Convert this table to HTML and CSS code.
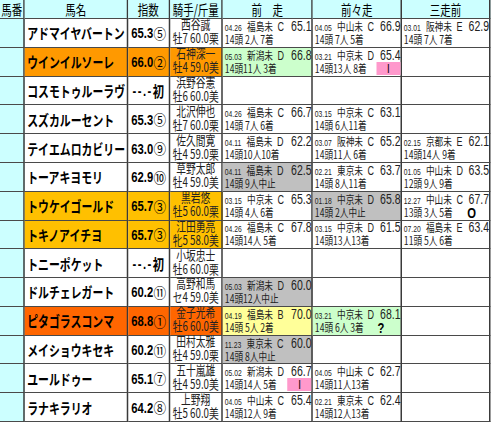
FILE: index.html
```html
<!DOCTYPE html>
<html lang="ja">
<head>
<meta charset="utf-8">
<title>出馬表</title>
<link rel="stylesheet" href="styles.css">
</head>
<body>
<div class="frame">
<div class="sheet">
  <div class="c hd">馬番</div>
  <div class="c hd">馬名</div>
  <div class="c hd">指数</div>
  <div class="c hd">騎手/斤量</div>
  <div class="c hd">前　走</div>
  <div class="c hd">前々走</div>
  <div class="c hd">三走前</div>

  <div class="c no"></div>
  <div class="c nm">アドマイヤバートン</div>
  <div class="c ix"><span class="v">65.3</span><span class="cn">⑤</span></div>
  <div class="c jk"><span>西谷誠</span><span>牡7 60.0栗</span></div>
  <div class="c rc"><div class="l1"><span class="dt">04.26</span><span class="vn">福島未</span><span class="cl">C</span><span class="sc">65.1</span></div><div class="l2"><span>14頭 2人 7着</span></div></div>
  <div class="c rc"><div class="l1"><span class="dt">04.05</span><span class="vn">中山未</span><span class="cl">C</span><span class="sc">66.9</span></div><div class="l2"><span>14頭 7人 5着</span></div></div>
  <div class="c rc"><div class="l1"><span class="dt">03.01</span><span class="vn">阪神未</span><span class="cl">E</span><span class="sc">62.9</span></div><div class="l2"><span>14頭 7人 7着</span></div></div>

  <div class="c no"></div>
  <div class="c nm or">ウインイルソーレ</div>
  <div class="c ix or"><span class="v">66.0</span><span class="cn">②</span></div>
  <div class="c jk or"><span>石神深一</span><span>牡4 59.0美</span></div>
  <div class="c rc gn"><div class="l1"><span class="dt">05.03</span><span class="vn">新潟未</span><span class="cl">D</span><span class="sc">66.8</span></div><div class="l2"><span>14頭11人 3着</span></div></div>
  <div class="c rc"><div class="l1"><span class="dt">03.21</span><span class="vn">中京未</span><span class="cl">D</span><span class="sc">65.4</span></div><div class="l2"><span>14頭13人 8着</span><span class="mk pk">I</span></div></div>
  <div class="c rc"></div>

  <div class="c no"></div>
  <div class="c nm">コスモトゥルーラヴ</div>
  <div class="c ix"><span class="v dash">--.-</span><span class="first">初</span></div>
  <div class="c jk"><span>浜野谷憲</span><span>牡6 60.0美</span></div>
  <div class="c rc"></div>
  <div class="c rc"></div>
  <div class="c rc"></div>

  <div class="c no"></div>
  <div class="c nm">スズカルーセント</div>
  <div class="c ix"><span class="v">65.3</span><span class="cn">⑤</span></div>
  <div class="c jk"><span>北沢伸也</span><span>牡7 60.0栗</span></div>
  <div class="c rc"><div class="l1"><span class="dt">04.26</span><span class="vn">福島未</span><span class="cl">C</span><span class="sc">66.7</span></div><div class="l2"><span>14頭 7人 6着</span></div></div>
  <div class="c rc"><div class="l1"><span class="dt">03.15</span><span class="vn">中京未</span><span class="cl">C</span><span class="sc">63.1</span></div><div class="l2"><span>14頭 6人11着</span></div></div>
  <div class="c rc"></div>

  <div class="c no"></div>
  <div class="c nm">テイエムロカビリー</div>
  <div class="c ix"><span class="v">63.0</span><span class="cn">⑨</span></div>
  <div class="c jk"><span>佐久間寛</span><span>牡4 59.0栗</span></div>
  <div class="c rc"><div class="l1"><span class="dt">04.11</span><span class="vn">福島未</span><span class="cl">D</span><span class="sc">62.2</span></div><div class="l2"><span>14頭10人10着</span></div></div>
  <div class="c rc"><div class="l1"><span class="dt">03.07</span><span class="vn">阪神未</span><span class="cl">C</span><span class="sc">65.2</span></div><div class="l2"><span>14頭11人 6着</span></div></div>
  <div class="c rc"><div class="l1"><span class="dt">02.15</span><span class="vn">京都未</span><span class="cl">E</span><span class="sc">62.1</span></div><div class="l2"><span>14頭14人 9着</span></div></div>

  <div class="c no"></div>
  <div class="c nm">トーアキヨモリ</div>
  <div class="c ix"><span class="v">62.9</span><span class="cn">⑩</span></div>
  <div class="c jk"><span>草野太郎</span><span>牡4 59.0美</span></div>
  <div class="c rc gy"><div class="l1"><span class="dt">04.11</span><span class="vn">福島未</span><span class="cl">D</span><span class="sc">62.5</span></div><div class="l2"><span>14頭 9人中止</span></div></div>
  <div class="c rc"><div class="l1"><span class="dt">02.21</span><span class="vn">東京未</span><span class="cl">C</span><span class="sc">63.7</span></div><div class="l2"><span>14頭 8人11着</span></div></div>
  <div class="c rc"><div class="l1"><span class="dt">01.05</span><span class="vn">中山未</span><span class="cl">D</span><span class="sc">63.5</span></div><div class="l2"><span>12頭 9人 9着</span></div></div>

  <div class="c no"></div>
  <div class="c nm gd">トウケイゴールド</div>
  <div class="c ix gd"><span class="v">65.7</span><span class="cn">③</span></div>
  <div class="c jk gd"><span>黒岩悠</span><span>牡5 60.0栗</span></div>
  <div class="c rc"><div class="l1"><span class="dt">03.15</span><span class="vn">中京未</span><span class="cl">C</span><span class="sc">65.3</span></div><div class="l2"><span>14頭 4人 6着</span></div></div>
  <div class="c rc gy"><div class="l1"><span class="dt">01.18</span><span class="vn">中京未</span><span class="cl">D</span><span class="sc">65.8</span></div><div class="l2"><span>14頭 2人中止</span></div></div>
  <div class="c rc"><div class="l1"><span class="dt">12.27</span><span class="vn">中山未</span><span class="cl">C</span><span class="sc">67.7</span></div><div class="l2"><span>13頭 3人 5着</span><span class="mk mo">O</span></div></div>

  <div class="c no"></div>
  <div class="c nm gd">トキノアイチヨ</div>
  <div class="c ix gd"><span class="v">65.7</span><span class="cn">③</span></div>
  <div class="c jk gd"><span>江田勇亮</span><span>牝5 58.0美</span></div>
  <div class="c rc"><div class="l1"><span class="dt">04.26</span><span class="vn">福島未</span><span class="cl">C</span><span class="sc">67.8</span></div><div class="l2"><span>14頭14人 5着</span></div></div>
  <div class="c rc"><div class="l1"><span class="dt">03.15</span><span class="vn">中京未</span><span class="cl">D</span><span class="sc">61.5</span></div><div class="l2"><span>14頭13人13着</span></div></div>
  <div class="c rc"><div class="l1"><span class="dt">07.20</span><span class="vn">福島未</span><span class="cl">E</span><span class="sc">63.4</span></div><div class="l2"><span>11頭 5人 6着</span></div></div>

  <div class="c no"></div>
  <div class="c nm">トニーポケット</div>
  <div class="c ix"><span class="v dash">--.-</span><span class="first">初</span></div>
  <div class="c jk"><span>小坂忠士</span><span>牡6 60.0栗</span></div>
  <div class="c rc"></div>
  <div class="c rc"></div>
  <div class="c rc"></div>

  <div class="c no"></div>
  <div class="c nm">ドルチェレガート</div>
  <div class="c ix"><span class="v">60.2</span><span class="cn">⑪</span></div>
  <div class="c jk"><span>高野和馬</span><span>セ4 59.0美</span></div>
  <div class="c rc gy"><div class="l1"><span class="dt">05.03</span><span class="vn">新潟未</span><span class="cl">D</span><span class="sc">60.0</span></div><div class="l2"><span>14頭12人中止</span></div></div>
  <div class="c rc"></div>
  <div class="c rc"></div>

  <div class="c no"></div>
  <div class="c nm rd">ピタゴラスコンマ</div>
  <div class="c ix rd"><span class="v">68.8</span><span class="cn">①</span></div>
  <div class="c jk rd"><span>金子光希</span><span>牡6 60.0美</span></div>
  <div class="c rc yl"><div class="l1"><span class="dt">04.19</span><span class="vn">福島未</span><span class="cl">B</span><span class="sc">70.0</span></div><div class="l2"><span>14頭 5人 2着</span></div></div>
  <div class="c rc gn"><div class="l1"><span class="dt">03.21</span><span class="vn">中京未</span><span class="cl">D</span><span class="sc">68.1</span></div><div class="l2"><span>14頭 6人 3着</span><span class="mk mq">?</span></div></div>
  <div class="c rc"></div>

  <div class="c no"></div>
  <div class="c nm">メイショウキセキ</div>
  <div class="c ix"><span class="v">60.2</span><span class="cn">⑪</span></div>
  <div class="c jk"><span>田村太雅</span><span>牡4 59.0栗</span></div>
  <div class="c rc gy"><div class="l1"><span class="dt">11.23</span><span class="vn">東京未</span><span class="cl">C</span><span class="sc">60.0</span></div><div class="l2"><span>14頭 8人中止</span></div></div>
  <div class="c rc"></div>
  <div class="c rc"></div>

  <div class="c no"></div>
  <div class="c nm">ユールドゥー</div>
  <div class="c ix"><span class="v">65.1</span><span class="cn">⑦</span></div>
  <div class="c jk"><span>五十嵐雄</span><span>牡4 59.0美</span></div>
  <div class="c rc"><div class="l1"><span class="dt">05.02</span><span class="vn">新潟未</span><span class="cl">D</span><span class="sc">66.7</span></div><div class="l2"><span>14頭14人 5着</span><span class="mk pk">I</span></div></div>
  <div class="c rc"><div class="l1"><span class="dt">04.05</span><span class="vn">中山未</span><span class="cl">C</span><span class="sc">62.7</span></div><div class="l2"><span>14頭11人13着</span></div></div>
  <div class="c rc"></div>

  <div class="c no"></div>
  <div class="c nm">ラナキラリオ</div>
  <div class="c ix"><span class="v">64.2</span><span class="cn">⑧</span></div>
  <div class="c jk"><span>上野翔</span><span>牡5 60.0美</span></div>
  <div class="c rc"><div class="l1"><span class="dt">04.05</span><span class="vn">中山未</span><span class="cl">C</span><span class="sc">65.4</span></div><div class="l2"><span>14頭12人 9着</span></div></div>
  <div class="c rc"><div class="l1"><span class="dt">02.21</span><span class="vn">東京未</span><span class="cl">C</span><span class="sc">62.4</span></div><div class="l2"><span>14頭12人13着</span></div></div>
  <div class="c rc"></div>
</div>
</div>
</body>
</html>
```

FILE: styles.css
```css
html, body {
  margin: 0;
  padding: 0;
  background: #ffffff;
  overflow: hidden;
}

body {
  font-family: "Noto Sans CJK JP", "Noto Sans", sans-serif;
  color: #1a1a1a;
}

.frame {
  width: 491px;
  height: 423px;
  overflow: hidden;
}

/* the sheet is laid out at natural width and squeezed horizontally,
   like the condensed rendering of the original spreadsheet */
.sheet {
  width: 654px;
  height: 422px;
  display: grid;
  grid-template-columns: 33.33px 137.33px 56px 70.67px 120px 118.67px 118px;
  grid-template-rows: 19px repeat(14, 1fr);
  transform: scaleX(0.75);
  transform-origin: 0 0;
}

.c {
  box-sizing: border-box;
  border-right: 2.67px solid #3a3a3a;
  border-bottom: 1px solid #4a4a4a;
  min-width: 0;
  min-height: 0;
  white-space: pre;
}

.hd {
  background: #ccffff;
  display: flex;
  align-items: center;
  justify-content: center;
  font-size: 14px;
  line-height: 1;
  color: #000;
}

.no {
  background: #ccffff;
}

.nm {
  display: flex;
  align-items: center;
  padding-left: 3px;
  font-weight: 700;
  font-size: 14.5px;
  color: #000;
}

.ix {
  display: flex;
  align-items: center;
  justify-content: center;
  color: #000;
}

.ix .v {
  font-family: "Liberation Sans", sans-serif;
  font-weight: 700;
  font-size: 15px;
}

.ix .dash {
  letter-spacing: 2px;
}

.ix .cn {
  display: inline-block;
  font-size: 14px;
  transform: scaleX(1.2);
  margin-left: 2px;
}

.ix .first {
  font-weight: 700;
  font-size: 15px;
}

.jk {
  display: flex;
  flex-direction: column;
  align-items: center;
  justify-content: center;
  padding-bottom: 3px;
  font-size: 13px;
  line-height: 14px;
  color: #222;
}

.jk span {
  display: block;
  height: 14px;
}

.rc {
  display: flex;
  flex-direction: column;
  justify-content: center;
  padding-left: 2.5px;
  color: #222;
}

.l1 {
  display: flex;
  align-items: baseline;
  height: 13px;
  line-height: 13px;
}

.dt {
  font-family: "Liberation Sans", sans-serif;
  font-size: 9px;
  margin-right: 7px;
}

.vn {
  font-size: 11.5px;
}

.cl {
  font-family: "Liberation Sans", sans-serif;
  font-size: 12px;
  margin-left: 6px;
}

.sc {
  margin-left: auto;
  font-family: "Liberation Sans", sans-serif;
  font-size: 14px;
}

.l2 {
  display: flex;
  align-items: flex-end;
  height: 13px;
  line-height: 13px;
  font-size: 11.5px;
}

.mk {
  margin-left: auto;
  width: 32px;
  height: 13px;
  line-height: 13px;
  text-align: center;
  font-family: "Liberation Sans", sans-serif;
  color: #000;
}

.pk {
  background: #ff99cc;
  font-size: 13px;
}

.mq {
  font-weight: 700;
  font-size: 15px;
  margin-right: 10px;
}

.mo {
  font-weight: 700;
  font-size: 15px;
  margin-right: 7px;
}

.or { background: #ff9900; }
.gd { background: #ffc000; }
.rd { background: #ff6600; }
.gy { background: #c0c0c0; }
.gn { background: #ccffcc; }
.yl { background: #ffff99; }
```
